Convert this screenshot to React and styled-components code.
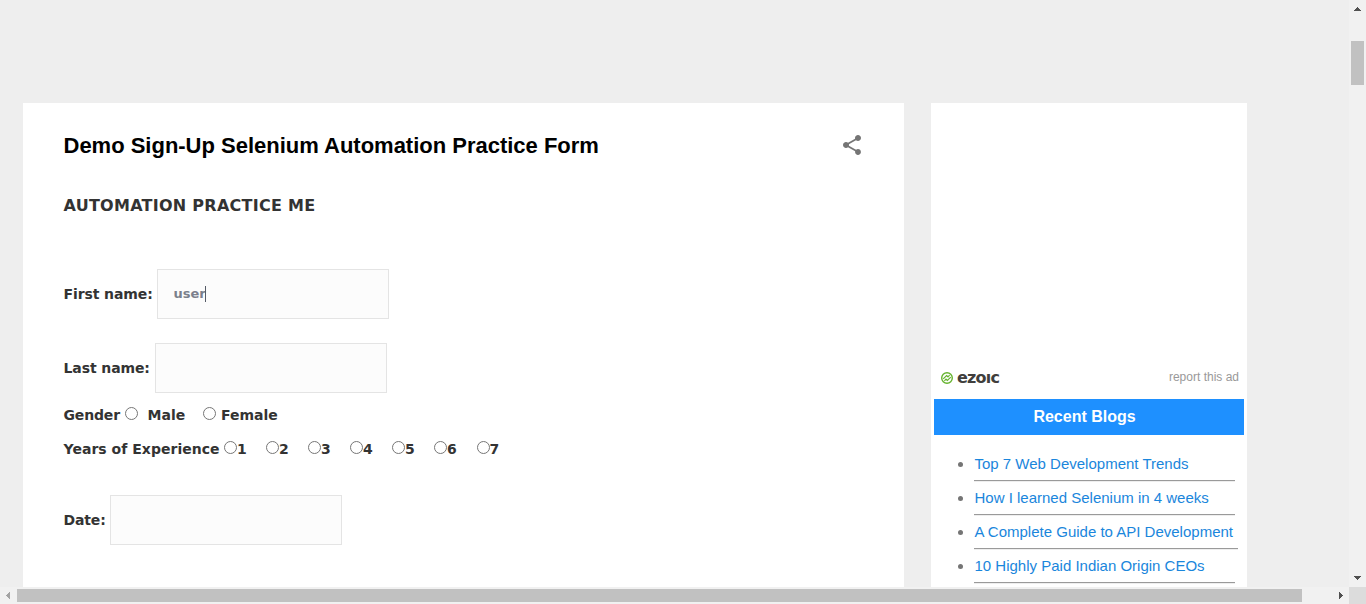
import React from "react";
import styled, { createGlobalStyle } from "styled-components";

const Global = createGlobalStyle`
  * { box-sizing: border-box; }
  body { margin: 0; overflow: hidden; background: #eee; }
`;
const sans = `"Liberation Sans", Arial, sans-serif`;
const verdana = `Verdana, "DejaVu Sans", sans-serif`;

const Frame = styled.div`
  display: grid;
  grid-template: 587px 17px / 1349px 17px;
  width: 1366px;
  height: 604px;
  overflow: hidden;
`;
const Page = styled.div`
  display: flex;
  gap: 27px;
  padding: 103px 0 0 23px;
  background: #eee;
  overflow: hidden;
`;
const Post = styled.main`
  width: 881px;
  padding: 27px 40px 0 40.5px;
  background: #fff;
  font: bold 14px/20px ${verdana};
  color: #333;
`;
const PostHeader = styled.header`
  display: flex;
  justify-content: space-between;
  align-items: center;
  height: 30px;
`;
const Title = styled.h1`
  margin: 0;
  padding-top: 2px;
  font: bold 22px/30px ${sans};
  color: #000;
  white-space: nowrap;
  letter-spacing: -0.01px;
`;
const ShareIcon = styled.svg`
  width: 24px;
  height: 24px;
  fill: #757575;
`;
const Subtitle = styled.h2`
  margin: 36px 0 0;
  font: bold 16px/20px ${verdana};
  white-space: nowrap;
  letter-spacing: 0.27px;
`;
const Field = styled.label`
  display: flex;
  align-items: center;
  height: 50px;
  margin-top: ${(p) => p.$top}px;
`;
const Caption = styled.span`
  flex: none;
  width: ${(p) => p.$width}px;
  white-space: nowrap;
  letter-spacing: ${(p) => p.$spacing || 0}px;
`;
const Input = styled.div`
  display: flex;
  align-items: center;
  width: 232px;
  height: 50px;
  padding: 0 15.5px;
  border: 1px solid #e4e4e4;
  background: #fcfcfc;
  color: #7b808c;
  font-size: 13px;
`;
const Caret = styled.span`
  width: 1px;
  height: 16px;
  margin-left: -0.5px;
  background: #555b66;
`;
const Choices = styled.div`
  display: flex;
  align-items: center;
  height: 20px;
  margin-top: ${(p) => p.$top}px;
`;
const Choice = styled.label`
  display: flex;
  align-items: center;
  flex: none;
  gap: ${(p) => p.$gap || 0}px;
  width: ${(p) => p.$width}px;
`;
const Radio = styled.input.attrs({ type: "radio" })`
  flex: none;
  width: 13px;
  height: 13px;
  margin: 0 0 3px;
`;

const Sidebar = styled.aside`
  width: 316px;
  padding: 264px 3px 0;
  background: #fff;
  font-family: ${sans};
`;
const AdFooter = styled.div`
  display: flex;
  justify-content: space-between;
  height: 32px;
  padding: 0 5px 0 7px;
`;
const Brand = styled.div`
  display: flex;
  align-items: center;
  gap: 4px;
  height: 22px;
  font: bold 16px/22px "DejaVu Sans", sans-serif;
  letter-spacing: -0.8px;
  color: #403e3c;
`;
const BrandMark = styled.svg`
  width: 12px;
  height: 12px;
  fill: none;
  stroke: #65b32e;
`;
const Report = styled.span`
  font-size: 12px;
  line-height: 20px;
  color: #999;
`;
const WidgetTitle = styled.h2`
  height: 36px;
  margin: 0;
  padding-right: 9px;
  background: #1e90ff;
  color: #fff;
  font: bold 16px/35px ${sans};
  text-align: center;
`;
const BlogList = styled.ul`
  margin: 17px 0 0;
  padding: 0;
  list-style: none;
`;
const BlogItem = styled.li`
  display: flex;
  gap: 11px;
  height: 34px;
  padding-left: 24px;
`;
const Bullet = styled.span`
  width: 5px;
  height: 5px;
  margin-top: 10px;
  border-radius: 50%;
  background: #757575;
`;
const BlogLink = styled.a`
  width: ${(p) => (p.$wide ? 264 : 261)}px;
  height: 29px;
  padding-left: 0.5px;
  border-bottom: 1px solid #9a9a9a;
  box-shadow: 0 1px #eee;
  color: #1a86dc;
  font-size: 15px;
  line-height: 24px;
  white-space: nowrap;
`;

const VTrack = styled.div`
  display: flex;
  flex-direction: column;
  align-items: center;
  justify-content: space-between;
  background: #f1f1f1;
  padding: 7px 0;
`;
const VThumb = styled.div`
  width: 13px;
  height: 44px;
  margin: 30px 0 auto 0;
  background: #c1c1c1;
`;
const HTrack = styled.div`
  display: flex;
  align-items: center;
  background: #f1f1f1;
  padding: 0 6px;
`;
const HThumb = styled.div`
  width: 1285px;
  height: 13px;
  margin: 0 auto 0 7px;
  background: #c1c1c1;
`;
const Arrow = styled.svg`
  display: block;
  flex: none;
  fill: ${(p) => p.$color || "#505050"};
`;
const Corner = styled.div`
  background: #dcdcdc;
`;

const blogs = [
  "Top 7 Web Development Trends",
  "How I learned Selenium in 4 weeks",
  "A Complete Guide to API Development",
  "10 Highly Paid Indian Origin CEOs",
];

export default function App() {
  return (
    <Frame>
      <Global />
      <Page>
        <Post>
          <PostHeader>
            <Title>Demo Sign-Up Selenium Automation Practice Form</Title>
            <ShareIcon viewBox="0 0 24 24">
              <path d="M18 16.08c-.76 0-1.44.3-1.96.77L8.91 12.7c.05-.23.09-.46.09-.7s-.04-.47-.09-.7l7.05-4.11c.54.5 1.25.81 2.04.81 1.66 0 3-1.34 3-3s-1.34-3-3-3-3 1.34-3 3c0 .24.04.47.09.7L8.04 9.81C7.5 9.31 6.79 9 6 9c-1.66 0-3 1.34-3 3s1.34 3 3 3c.79 0 1.5-.31 2.04-.81l7.12 4.16c-.05.21-.08.43-.08.65 0 1.61 1.31 2.92 2.92 2.92s2.92-1.31 2.92-2.92-1.31-2.92-2.92-2.92z" />
            </ShareIcon>
          </PostHeader>
          <Subtitle>AUTOMATION PRACTICE ME</Subtitle>
          <Field $top={53}>
            <Caption $width={93.5} $spacing={-0.1}>First name:</Caption>
            <Input>user<Caret /></Input>
          </Field>
          <Field $top={24}>
            <Caption $width={91.5} $spacing={-0.1}>Last name:</Caption>
            <Input />
          </Field>
          <Choices $top={12}>
            <Caption $width={61.5} $spacing={-0.15}>Gender</Caption>
            <Choice $width={78} $gap={9.5}><Radio name="gender" />Male</Choice>
            <Choice $width={80} $gap={5}><Radio name="gender" />Female</Choice>
          </Choices>
          <Choices $top={14}>
            <Caption $width={160.5} $spacing={0.03}>Years of Experience</Caption>
            {[1, 2, 3, 4, 5, 6, 7].map((n) => (
              <Choice key={n} $width={n === 6 ? 42.5 : 42}><Radio name="years" />{n}</Choice>
            ))}
          </Choices>
          <Field $top={36}>
            <Caption $width={46.5} $spacing={-0.15}>Date:</Caption>
            <Input />
          </Field>
        </Post>
        <Sidebar>
          <AdFooter>
            <Brand>
              <BrandMark viewBox="0 0 12 12">
                <circle cx="6" cy="6" r="5.3" strokeWidth="1.4" />
                <path d="M2.2 6.9 5.6 3.5 7 4.8 8.6 3.2M3.4 8.8l1.6-1.6 1.4 1.3 3.4-3.4" strokeWidth="1.2" />
              </BrandMark>
              ezoıc
            </Brand>
            <Report>report this ad</Report>
          </AdFooter>
          <WidgetTitle>Recent Blogs</WidgetTitle>
          <BlogList>
            {blogs.map((title, i) => (
              <BlogItem key={title}>
                <Bullet />
                <BlogLink $wide={i === 2}>{title}</BlogLink>
              </BlogItem>
            ))}
          </BlogList>
        </Sidebar>
      </Page>
      <VTrack>
        <Arrow width="7" height="4"><path d="M3 0h1v1h1v1h1v1h1v1H0V3h1V2h1V1h1z" /></Arrow>
        <VThumb />
        <Arrow width="7" height="4"><path d="M0 0h7v1H6v1H5v1H4v1H3V3H2V2H1V1H0z" /></Arrow>
      </VTrack>
      <HTrack>
        <Arrow width="4" height="7" $color="#a3a3a3"><path d="M4 0v7H3V6H2V5H1V4H0V3h1V2h1V1h1V0z" /></Arrow>
        <HThumb />
        <Arrow width="4" height="7"><path d="M0 0h1v1h1v1h1v1h1v1H3v1H2v1H1v1H0z" /></Arrow>
      </HTrack>
      <Corner />
    </Frame>
  );
}
